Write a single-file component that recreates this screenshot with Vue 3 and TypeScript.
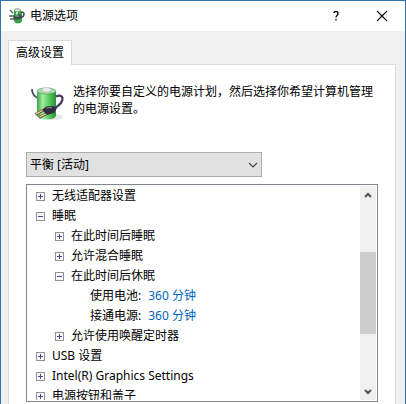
<script setup lang="ts">
import { computed, ref } from 'vue'

interface Setting {
  label: string
  value: string
}

interface Group {
  label: string
  open?: boolean
  children?: Group[]
  settings?: Setting[]
}

interface Row {
  label: string
  level: number
  group?: Group
  value?: string
}

const plan = ref('balanced')
const list = ref<HTMLElement | null>(null)

const groups = ref<Group[]>([
  { label: '无线适配器设置' },
  {
    label: '睡眠',
    open: true,
    children: [
      { label: '在此时间后睡眠' },
      { label: '允许混合睡眠' },
      {
        label: '在此时间后休眠',
        open: true,
        settings: [
          { label: '使用电池:', value: '360 分钟' },
          { label: '接通电源:', value: '360 分钟' },
        ],
      },
      { label: '允许使用唤醒定时器' },
    ],
  },
  { label: 'USB 设置' },
  { label: 'Intel(R) Graphics Settings' },
  { label: '电源按钮和盖子' },
])

function flatten(items: Group[], level: number): Row[] {
  return items.flatMap((group) => {
    const rows: Row[] = [{ label: group.label, level, group }]
    if (group.open) {
      rows.push(...flatten(group.children ?? [], level + 1))
      rows.push(...(group.settings ?? []).map((s) => ({ ...s, level: level + 1 })))
    }
    return rows
  })
}

const rows = computed(() => flatten(groups.value, 1))

function scroll(step: number) {
  list.value?.scrollBy({ top: step * 20 })
}
</script>

<template>
  <main class="window">
    <header class="titlebar">
      <svg class="app-icon" viewBox="0 0 16 16" aria-hidden="true">
        <path d="M5 3 Q6 1 9 1 Q11 1 12 3 L13 5 V13 Q12 15.500 9 15.500 Q6 15.500 5 13 Z" fill="#36a442" />
        <ellipse cx="8.500" cy="2.300" rx="3.300" ry="1.600" fill="#dce6dc" stroke="#4c6a55" stroke-width=".6" />
        <path d="M8 4 V7" stroke="#a9edaf" stroke-width="2" />
        <path d="M12 4 Q15 4 15 6 Q15 9 11 10" fill="none" stroke="#3f4c4d" stroke-width="1.500" />
        <path d="M4 8 L10 6 L13 8 L11 11 L5 12 Z" fill="#374b43" />
        <path d="M0 8 H5 M1 11 H6 M1 2 L4 5" stroke="#55605c" stroke-width="1.300" />
        <path d="M6 8 H10" stroke="#a4b3ab" />
      </svg>
      <h1>电源选项</h1>
      <button class="caption" type="button" aria-label="帮助">
        <svg viewBox="0 0 12 12" aria-hidden="true">
          <path d="M4 3 Q4 1.500 6 1.500 Q8 1.500 8 3.500 Q8 4.700 7 5.500 Q6 6.200 6 7.500 M6 9 V10.500" fill="none" stroke="#000" stroke-width="1.300" />
        </svg>
      </button>
      <button class="caption" type="button" aria-label="关闭">
        <svg viewBox="0 0 12 12" aria-hidden="true">
          <path d="M1 1 L11 11 M11 1 L1 11" stroke="#000" stroke-width="1.100" />
        </svg>
      </button>
    </header>

    <div class="body">
      <div class="tabs" role="tablist">
        <button id="tab-advanced" class="tab" type="button" role="tab" aria-selected="true" aria-controls="panel-advanced">高级设置</button>
      </div>
      <section id="panel-advanced" class="panel" role="tabpanel" aria-labelledby="tab-advanced">
        <div class="intro">
          <svg class="battery" viewBox="0 0 32 36" aria-hidden="true">
            <defs>
              <linearGradient id="cell">
                <stop offset="0" stop-color="#3aa545" />
                <stop offset=".3" stop-color="#a4eda2" />
                <stop offset=".6" stop-color="#5ccf62" />
                <stop offset="1" stop-color="#2b9039" />
              </linearGradient>
            </defs>
            <ellipse cx="22" cy="31" rx="9" ry="3" fill="#e6e6e6" />
            <path d="M0 3 Q0 9 5.500 12" fill="none" stroke="#51476a" stroke-width="1.800" />
            <path d="M5 5 V30 Q7 33.500 14.500 33.500 Q22 33.500 24 30 V5 Z" fill="url(#cell)" />
            <ellipse cx="14.500" cy="5" rx="9.500" ry="3" fill="#a9d9ab" stroke="#4d9b55" stroke-width=".6" />
            <path d="M10 3 Q14.500 -.500 19 3 V5 Q14.500 7.500 10 5 Z" fill="#eceeec" stroke="#a8b5aa" stroke-width=".6" />
            <path d="M24 10.500 Q29 8 30.500 12 Q31 17 23 22" fill="none" stroke="#463b62" stroke-width="2.200" />
            <path d="M10 24 L14 20.500 L21 20 L25 22 L22 27 L15 29 Z" fill="#302b3c" />
            <path d="M14 22 L20 21.500" stroke="#8c8798" />
            <path d="M11 24.500 L3.500 28.500 M14 28 L7 31.500" stroke="#6b543a" stroke-width="2.600" />
            <path d="M10.500 24.500 L4 28 M13.500 28 L7.500 31" stroke="#f0dda5" stroke-width="1.100" />
          </svg>
          <p>选择你要自定义的电源计划，然后选择你希望计算机管理的电源设置。</p>
        </div>

        <div class="plan">
          <select v-model="plan" aria-label="电源计划">
            <option value="balanced">平衡 [活动]</option>
          </select>
          <svg viewBox="0 0 10 6" aria-hidden="true">
            <path d="M1 1 L5 5 L9 1" fill="none" stroke="#444" stroke-width="1.200" />
          </svg>
        </div>

        <div class="tree">
          <ul ref="list" role="tree" aria-label="高级设置">
            <li v-for="(row, i) in rows" :key="i" role="treeitem" :aria-level="row.level" :class="`level-${row.level}`">
              <button
                v-if="row.group"
                class="toggle"
                type="button"
                :aria-label="row.label"
                :aria-expanded="!!row.group.open"
                @click="row.group.open = !row.group.open"
              >
                <svg viewBox="0 0 9 9" aria-hidden="true">
                  <rect x=".5" y=".5" width="8" height="8" fill="#fafafa" stroke="#919191" />
                  <path d="M2 4.500 H7" stroke="#3c4c8c" />
                  <path v-if="!row.group.open" d="M4.500 2 V7" stroke="#3c4c8c" />
                </svg>
              </button>
              <span>{{ row.label }}</span>
              <button v-if="row.value" class="value" type="button">{{ row.value }}</button>
            </li>
          </ul>
          <div class="scrollbar">
            <button type="button" aria-label="向上滚动" @click="scroll(-1)">
              <svg viewBox="0 0 8 6" aria-hidden="true"><path d="M1 5 L4 2 L7 5" fill="none" stroke="#505050" stroke-width="2" /></svg>
            </button>
            <div class="track">
              <div class="before"></div>
              <div class="thumb"></div>
              <div class="after"></div>
            </div>
            <button type="button" aria-label="向下滚动" @click="scroll(1)">
              <svg viewBox="0 0 8 6" aria-hidden="true"><path d="M1 1 L4 4 L7 1" fill="none" stroke="#505050" stroke-width="2" /></svg>
            </button>
          </div>
        </div>
      </section>
    </div>
  </main>
</template>

<style>
body {
  margin: 0;
}
</style>

<style scoped>
.window {
  box-sizing: border-box;
  display: flex;
  flex-direction: column;
  height: 100vh;
  overflow: hidden;
  border: 1px solid #2f73ae;
  border-bottom: 0;
  background: #f0f0f0;
  color: #000;
  font: 12px/18px "Noto Sans", "Noto Sans CJK SC", sans-serif;
}

button,
select {
  margin: 0;
  padding: 0;
  border: 0;
  border-radius: 0;
  background: none;
  color: inherit;
  font: inherit;
}

svg {
  display: block;
}

.titlebar {
  display: flex;
  flex: none;
  align-items: center;
  height: 30px;
  padding-left: 8px;
  background: #fff;
}

.app-icon {
  width: 16px;
  height: 16px;
}

h1 {
  flex: 1;
  margin: 0 0 0 5px;
  font-size: 12px;
  font-weight: 400;
}

.caption {
  display: grid;
  place-items: center;
  width: 46px;
  height: 28px;
}

.caption svg {
  width: 12px;
  height: 12px;
}

.body {
  display: flex;
  flex: 1;
  flex-direction: column;
  min-height: 0;
  padding: 9px 9px 0 7px;
}

.tabs {
  display: flex;
}

.tab {
  z-index: 1;
  height: 25px;
  margin-bottom: -1px;
  padding: 0 7px;
  border: 1px solid #d9d9d9;
  border-bottom: 0;
  background: #fff;
}

.panel {
  display: flex;
  flex: 1;
  flex-direction: column;
  min-height: 0;
  padding: 18px 17px 2px;
  border: 1px solid #dcdcdc;
  border-bottom: 0;
  background: #fff;
}

.intro {
  display: flex;
  gap: 9px;
  height: 69px;
  padding-left: 6px;
}

.battery {
  flex: none;
  width: 32px;
  height: 36px;
  margin-top: 3px;
  overflow: visible;
}

p {
  margin: 0;
  line-height: 17px;
}

.plan {
  position: relative;
  flex: none;
  width: 67%;
}

.plan select {
  box-sizing: border-box;
  width: 100%;
  height: 25px;
  padding: 0 24px 0 3px;
  border: 1px solid #adadad;
  background: #e1e1e1;
  appearance: none;
}

.plan svg {
  position: absolute;
  top: 10px;
  right: 4px;
  width: 10px;
  height: 6px;
  pointer-events: none;
}

.tree {
  display: flex;
  flex: 1;
  min-height: 0;
  margin-top: 7px;
  padding: 1px;
  border: 1px solid #828790;
}

ul {
  flex: 1;
  margin: 0;
  padding: 0 0 0 8px;
  overflow: hidden;
  list-style: none;
}

li {
  display: flex;
  gap: 7px;
  align-items: center;
  height: 20px;
}

.level-2 {
  padding-left: 19px;
}

.level-3 {
  padding-left: 54px;
}

.toggle svg {
  width: 9px;
  height: 9px;
}

.value {
  color: #0066bf;
}

.scrollbar {
  display: flex;
  flex-direction: column;
  width: 16px;
  background: #f0f0f0;
}

.scrollbar button {
  display: grid;
  place-items: center;
  height: 17px;
}

.scrollbar svg {
  width: 8px;
  height: 6px;
}

.track {
  display: flex;
  flex: 1;
  flex-direction: column;
}

.before {
  flex: 49;
}

.thumb {
  flex: 82;
  background: #cdcdcd;
}

.after {
  flex: 49;
}
</style>
